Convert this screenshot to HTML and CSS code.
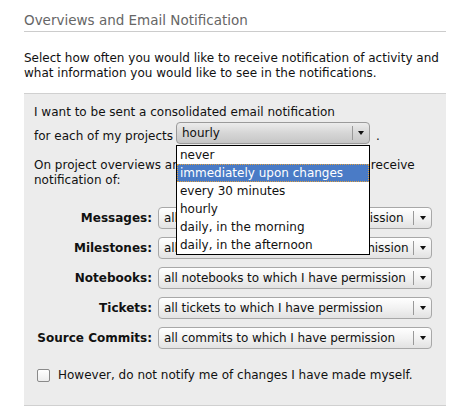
FILE: index.html
```html
<!DOCTYPE html>
<html>
<head>
<meta charset="utf-8">
<link rel="stylesheet" href="styles.css">
</head>
<body>
<div class="page">
  <h2 class="title">Overviews and Email Notification</h2>
  <p class="intro">Select how often you would like to receive notification of activity and what information you would like to see in the notifications.</p>
  <div class="panel">
    <p class="line">I want to be sent a consolidated email notification</p>
    <div class="freq-row">
      <span>for each of my projects</span>
      <div class="freq-wrap">
        <div class="select select-freq"><span class="value">hourly</span><span class="arrow"><i></i></span></div>
        <ul class="dropdown">
          <li>never</li>
          <li class="active">immediately upon changes</li>
          <li>every 30 minutes</li>
          <li>hourly</li>
          <li>daily, in the morning</li>
          <li>daily, in the afternoon</li>
        </ul>
      </div>
      <span class="dot">.</span>
    </div>
    <p class="line2">On project overviews and in each e-mail, I would like to receive notification of:</p>
    <div class="grid">
      <span class="label">Messages:</span>
      <div class="select"><span class="value">all messages to which I have permission</span><span class="arrow"><i></i></span></div>
      <span class="label">Milestones:</span>
      <div class="select"><span class="value">all milestones to which I have permission</span><span class="arrow"><i></i></span></div>
      <span class="label">Notebooks:</span>
      <div class="select"><span class="value">all notebooks to which I have permission</span><span class="arrow"><i></i></span></div>
      <span class="label">Tickets:</span>
      <div class="select"><span class="value">all tickets to which I have permission</span><span class="arrow"><i></i></span></div>
      <span class="label">Source Commits:</span>
      <div class="select"><span class="value">all commits to which I have permission</span><span class="arrow"><i></i></span></div>
    </div>
    <div class="check"><span class="box"></span><span>However, do not notify me of changes I have made myself.</span></div>
  </div>
</div>
</body>
</html>
```
FILE: styles.css
```css
body {
  margin: 0;
  font-family: "DejaVu Sans", sans-serif;
  font-size: 12px;
  color: #111;
  background: #fff;
}
.page {
  width: 422px;
  margin-left: 24px;
  padding-top: 12px;
}
.title {
  margin: 0;
  font-size: 13.5px;
  font-weight: normal;
  color: #666;
  line-height: 17px;
  padding-bottom: 2px;
  border-bottom: 1px solid #ccc;
}
.intro {
  margin: 19px 0 12px;
  line-height: 15px;
}
.panel {
  background: #ececec;
  border-top: 1px solid #d0d0d0;
  border-bottom: 1px solid #d0d0d0;
  padding: 11px 10px 22px;
}
.line, .line2 {
  margin: 0;
  line-height: 15px;
}
.freq-row {
  display: flex;
  align-items: flex-end;
  margin-top: 2px;
  line-height: 15px;
}
.freq-wrap {
  position: relative;
  margin-left: 3px;
}
.dot {
  margin-left: 6px;
}
.select {
  display: flex;
  align-items: center;
  box-sizing: border-box;
  height: 22px;
  border: 1px solid #a8a8a8;
  border-radius: 4px;
  background: linear-gradient(#ffffff, #f2f2f2 50%, #e2e2e2);
}
.select .value {
  flex: 1;
  padding-left: 5px;
  white-space: nowrap;
  overflow: hidden;
  letter-spacing: -0.08px;
}
.select .arrow {
  display: flex;
  align-items: center;
  justify-content: center;
  width: 17px;
  height: 14px;
  border-left: 1px solid #999;
}
.select .arrow i {
  width: 0;
  height: 0;
  border-left: 3.5px solid transparent;
  border-right: 3.5px solid transparent;
  border-top: 4px solid #111;
}
.select-freq {
  width: 194px;
  font-size: 12px;
  border-color: #9a9a9a;
  background: linear-gradient(#ececec, #d6d6d6 50%, #c6c6c6);
}
.select-freq .value {
  letter-spacing: 0;
}
.select-freq .arrow {
  width: 16px;
}
.dropdown {
  position: absolute;
  z-index: 5;
  top: 23px;
  left: 0;
  box-sizing: border-box;
  width: 194px;
  margin: 0;
  padding: 0;
  list-style: none;
  background: #fff;
  border: 1px solid #000;
  font-size: 12px;
}
.dropdown li {
  height: 18px;
  line-height: 18px;
  padding-left: 3px;
  white-space: nowrap;
}
.dropdown li.active {
  background: #4a7bc6;
  color: #fff;
  outline: 1px dotted #e0a040;
  outline-offset: -1px;
}
.line2 {
  margin-top: 14px;
}
.grid {
  display: grid;
  grid-template-columns: 118px 274px;
  column-gap: 6px;
  row-gap: 8px;
  align-items: center;
  margin-top: 19px;
}
.label {
  font-weight: bold;
  text-align: right;
  white-space: nowrap;
}
.check {
  display: flex;
  align-items: center;
  margin-top: 19px;
  padding-left: 3px;
  line-height: 15px;
}
.check .box {
  box-sizing: border-box;
  width: 13px;
  height: 13px;
  border: 1px solid #8a8a8a;
  border-radius: 2px;
  background: linear-gradient(#fff, #ededed);
  margin-right: 8px;
}
```
